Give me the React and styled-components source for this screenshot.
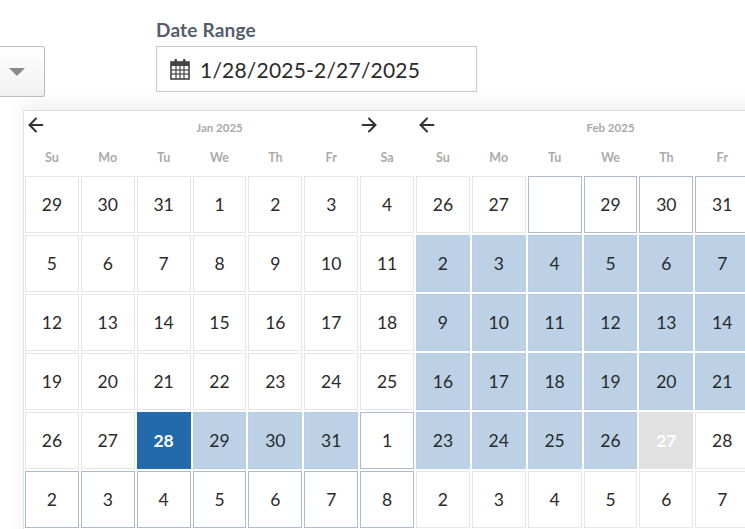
import React from "react";
import styled, { createGlobalStyle } from "styled-components";
import { ArrowLeft, ArrowRight } from "lucide-react";

const Global = createGlobalStyle`
  body { margin: 0; background: #fff; font-family: "Open Sans", "Liberation Sans", sans-serif; }
`;

const Page = styled.div`
  width: 745px; height: 529px; overflow: hidden; position: relative;
`;
const TopRow = styled.div`
  display: flex; align-items: flex-start; padding-top: 19px;
`;
const Select = styled.div`
  width: 45px; height: 51px; margin-top: 27px; box-sizing: border-box;
  border: 1px solid #bdbdbd; border-left: none; border-radius: 0 3px 3px 0;
  background: linear-gradient(#fff, #f1f1f1);
  display: flex; align-items: center; padding-left: 9px;
`;
const Caret = styled.div`
  width: 0; height: 0; border-left: 8px solid transparent; border-right: 8px solid transparent;
  border-top: 8px solid #8a8a8e;
`;
const Field = styled.div`
  margin-left: 111px; display: flex; flex-direction: column;
`;
const Label = styled.div`
  font-size: 19px; font-weight: 700; color: #545d6a; line-height: 22px; margin-bottom: 5px;
  font-family: "Lato", "Open Sans", sans-serif; letter-spacing: 0.2px;
`;
const Input = styled.div`
  width: 321px; height: 46px; box-sizing: border-box; border: 1px solid #c9c9c9;
  display: flex; align-items: center; gap: 10px; padding-left: 13px;
  font-size: 21px; color: #2b2b2b; font-family: "Lato", sans-serif; letter-spacing: 0.2px;
`;
const Popup = styled.div`
  position: absolute; left: 23px; top: 110px; width: 800px; height: 460px;
  background: #fff; border-top: 1px solid #ddd; border-left: 1px solid #e3e3e3;
  box-shadow: 0 -6px 18px rgba(0,0,0,0.07);
  display: flex; gap: 2px; padding-left: 1px;
`;
const Month = styled.div`
  width: 389px; display: flex; flex-direction: column;
`;
const Header = styled.div`
  height: 29px; position: relative; display: flex; align-items: center; justify-content: center;
`;
const Title = styled.div`
  font-size: 11.5px; font-weight: 700; color: #a9a9a9; margin-top: 3px;
  font-family: "Lato", sans-serif;
`;
const Nav = styled.div`
  position: absolute; top: 3px; ${p => p.$right ? "left: 333px;" : "left: 0;"}
  color: #333; display: flex;
`;
const DayNames = styled.div`
  display: grid; grid-template-columns: repeat(7, 1fr); gap: 2px; height: 36px; align-items: center;
  padding-bottom: 2px; box-sizing: border-box;
`;
const DayName = styled.div`
  text-align: center; font-size: 12.5px; font-weight: 700; color: #ababab; font-family: "Lato", sans-serif;
`;
const Grid = styled.div`
  display: grid; grid-template-columns: repeat(7, 1fr); grid-auto-rows: 57px; gap: 2px;
`;
const Cell = styled.div`
  box-sizing: border-box; display: flex; align-items: center; justify-content: center;
  font-size: 17.5px; font-family: "Lato", sans-serif;
  border: 1px solid ${p => p.$t === "range" ? "#b7cde4" : p.$t === "sel" ? "#2369ac" : p.$t === "dis" ? "#e1e1e1" : p.$blue ? "#aebbcc" : "#e6e6e6"};
  background: ${p => p.$t === "range" ? "#bcd1e6" : p.$t === "sel" ? "#236aad" : p.$t === "dis" ? "#e1e1e1" : "#fff"};
  color: ${p => p.$t === "sel" || p.$t === "dis" ? "#fff" : "#2a2a2a"};
  font-weight: ${p => p.$t === "sel" || p.$t === "dis" ? 700 : 400};
`;

const CalIcon = () => (
  <svg width="20" height="22" viewBox="0 0 20 22">
    <rect x="1" y="4" width="18" height="17" fill="none" stroke="#444" strokeWidth="1.6" />
    <rect x="1" y="4" width="18" height="4" fill="#444" />
    <rect x="4.5" y="1" width="2.5" height="5" rx="1" fill="#444" />
    <rect x="13" y="1" width="2.5" height="5" rx="1" fill="#444" />
    {[6, 10, 14].map(x => <line key={x} x1={x} y1="8" x2={x} y2="21" stroke="#444" strokeWidth="1.2" />)}
    {[12, 16].map(y => <line key={y} x1="1" y1={y} x2="19" y2={y} stroke="#444" strokeWidth="1.2" />)}
  </svg>
);

const names = ["Su", "Mo", "Tu", "We", "Th", "Fr", "Sa"];
const range = (a, b) => Array.from({ length: b - a + 1 }, (_, i) => a + i);

const jan = [
  [29, 30, 31, 1, 2, 3, 4], range(5, 11), range(12, 18), range(19, 25),
  [26, 27, 28, 29, 30, 31, 1], range(2, 8),
].map((r, ri) => r.map((d, ci) => {
  let t = "";
  if (ri === 4 && ci === 2) t = "sel";
  else if (ri === 4 && ci > 2 && ci < 6) t = "range";
  return { d, t, blue: (ri === 5) || (ri === 4 && ci === 6) };
}));
const feb = [
  [26, 27, "", 29, 30, 31, 1], range(2, 8), range(9, 15), range(16, 22),
  [23, 24, 25, 26, 27, 28, 1], range(2, 8),
].map((r, ri) => r.map((d, ci) => {
  let t = "";
  if ((ri >= 1 && ri <= 3) || (ri === 4 && ci < 4) || (ri === 0 && ci === 6)) t = "range";
  if (ri === 4 && ci === 4) t = "dis";
  return { d, t, blue: ri === 0 && ci >= 2 };
}));

const MonthView = ({ title, rows, right }) => (
  <Month>
    <Header>
      <Nav><ArrowLeft size={22} strokeWidth={2.2} /></Nav>
      <Title>{title}</Title>
      {right && <Nav $right><ArrowRight size={22} strokeWidth={2.2} /></Nav>}
    </Header>
    <DayNames>{names.map(n => <DayName key={n}>{n}</DayName>)}</DayNames>
    <Grid>
      {rows.flat().map((c, i) => <Cell key={i} $t={c.t} $blue={c.blue}>{c.d}</Cell>)}
    </Grid>
  </Month>
);

export default function App() {
  return (
    <Page>
      <Global />
      <TopRow>
        <Select><Caret /></Select>
        <Field>
          <Label>Date Range</Label>
          <Input><CalIcon />1/28/2025-2/27/2025</Input>
        </Field>
      </TopRow>
      <Popup>
        <MonthView title="Jan 2025" rows={jan} right />
        <MonthView title="Feb 2025" rows={feb} />
      </Popup>
    </Page>
  );
}
